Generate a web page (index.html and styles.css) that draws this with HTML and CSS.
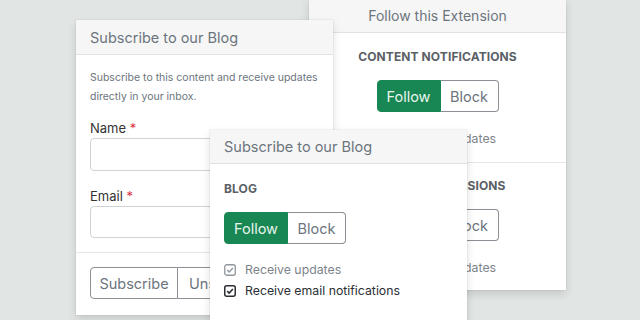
FILE: index.html
```html
<!DOCTYPE html>
<html>
<head>
<meta charset="utf-8">
<link rel="stylesheet" href="styles.css">
</head>
<body>
<div class="canvas">
  <section class="card card-b">
    <div class="card-header center">Follow this Extension</div>
    <div class="section center-col first">
      <div class="sec-title">CONTENT NOTIFICATIONS</div>
      <div class="btn-group">
        <span class="btn btn-follow">Follow</span>
        <span class="btn btn-block">Block</span>
      </div>
      <div class="check-row muted">
        <svg class="cb" width="12" height="12" viewBox="0 0 12 12"><rect x="0.75" y="0.75" width="10.5" height="10.5" rx="2" fill="none" stroke="currentColor" stroke-width="1.3"/><path d="M3.2 6.1 L5.2 8.1 L8.9 4" fill="none" stroke="currentColor" stroke-width="1.4"/></svg>
        <span>Receive updates</span>
      </div>
    </div>
    <div class="section center-col sec-border">
      <div class="sec-title">EXTENSION VERSIONS</div>
      <div class="btn-group">
        <span class="btn btn-follow">Follow</span>
        <span class="btn btn-block">Block</span>
      </div>
      <div class="check-row muted">
        <svg class="cb" width="12" height="12" viewBox="0 0 12 12"><rect x="0.75" y="0.75" width="10.5" height="10.5" rx="2" fill="none" stroke="currentColor" stroke-width="1.3"/><path d="M3.2 6.1 L5.2 8.1 L8.9 4" fill="none" stroke="currentColor" stroke-width="1.4"/></svg>
        <span>Receive updates</span>
      </div>
    </div>
  </section>

  <section class="card card-a">
    <div class="card-header">Subscribe to our Blog</div>
    <div class="card-body">
      <p class="desc">Subscribe to this content and receive updates directly in your inbox.</p>
      <label class="label">Name <span class="req">*</span></label>
      <div class="input"></div>
      <label class="label label-gap">Email <span class="req">*</span></label>
      <div class="input input-last"></div>
    </div>
    <div class="card-footer">
      <div class="btn-group">
        <span class="btn btn-outline">Subscribe</span>
        <span class="btn btn-outline">Unsubscribe</span>
      </div>
    </div>
  </section>

  <section class="card card-c">
    <div class="card-header">Subscribe to our Blog</div>
    <div class="section blog">
      <div class="sec-title">BLOG</div>
      <div class="btn-group">
        <span class="btn btn-follow">Follow</span>
        <span class="btn btn-block">Block</span>
      </div>
      <div class="checks">
        <div class="check-row muted">
          <svg class="cb" width="12" height="12" viewBox="0 0 12 12"><rect x="0.75" y="0.75" width="10.5" height="10.5" rx="2" fill="none" stroke="currentColor" stroke-width="1.3"/><path d="M3.2 6.1 L5.2 8.1 L8.9 4" fill="none" stroke="currentColor" stroke-width="1.4"/></svg>
          <span>Receive updates</span>
        </div>
        <div class="check-row dark">
          <svg class="cb" width="12" height="12" viewBox="0 0 12 12"><rect x="0.75" y="0.75" width="10.5" height="10.5" rx="2" fill="none" stroke="currentColor" stroke-width="1.5"/><path d="M3.2 6.1 L5.2 8.1 L8.9 4" fill="none" stroke="currentColor" stroke-width="1.6"/></svg>
          <span>Receive email notifications</span>
        </div>
      </div>
    </div>
  </section>
</div>
</body>
</html>
```

FILE: styles.css
```css
* { box-sizing: border-box; }
html, body { margin: 0; padding: 0; }
body {
  background: #e1e6e4;
  font-family: Inter, "Noto Sans", sans-serif;
  width: 640px;
  height: 320px;
  overflow: hidden;
}
.canvas { position: relative; width: 640px; height: 320px; overflow: hidden; }

.card {
  position: absolute;
  width: 257px;
  background: #fff;
  box-shadow: 0 0 0 1px rgba(0,0,0,0.035), 0 4px 9px rgba(0,0,0,0.13);
  display: flex;
  flex-direction: column;
}
.card-a { left: 76px; top: 20px; height: 295px; }
.card-b { left: 309px; top: -2px; height: 292px; }
.card-c { left: 210px; top: 130px; height: 200px; }

.card-header {
  height: 35px;
  flex: none;
  display: flex;
  align-items: center;
  padding: 0 14px;
  background: #f6f6f6;
  border-bottom: 1px solid #e2e2e2;
  color: #6c757d;
  font-size: 14.5px;
}
.card-header.center { justify-content: center; font-size: 14px; }
.card-c .card-header { height: 34px; }

.card-body { padding: 13px 14px 14px; border-bottom: 1px solid #e6e6e6; }
.desc {
  margin: 0 -8px 12px 0;
  font-size: 10.5px;
  line-height: 19px;
  color: #6c757d;
}
.label { display: block; font-size: 13px; line-height: 20px; color: #333; }
.label-gap { margin-top: 15px; }
.req { color: #dc3545; }
.input {
  height: 33px;
  border: 1px solid #cfd3d6;
  border-radius: 4px;
}
.input-last { height: 32px; }

.card-footer { padding: 14px 14px; }

.btn-group { display: flex; }
.btn {
  height: 32px;
  display: flex;
  align-items: center;
  justify-content: center;
  font-size: 14.5px;
  border: 1px solid #8a9096;
}
.btn:first-child { border-radius: 4px 0 0 4px; }
.btn:last-child { border-radius: 0 4px 4px 0; border-left: none; }
.btn-outline { color: #6c757d; padding: 0 12px; width: 88px; }
.btn-outline + .btn-outline { width: 110px; }
.btn-follow {
  background: #198754;
  border-color: #198754;
  color: #eaf5ee;
  width: 64px;
}
.btn-block { color: #6c757d; width: 58px; }

.section { padding: 15px 14px 13px; }
.section.first { padding-top: 16px; }
.section.blog { padding-top: 17px; }
.sec-border { border-top: 1px solid #e6e6e6; padding-top: 15px; }
.center-col { display: flex; flex-direction: column; align-items: center; }
.sec-title {
  font-size: 12px;
  font-weight: 700;
  color: #5a6066;
  line-height: 16px;
  margin-bottom: 15px;
  letter-spacing: 0.1px;
}
.check-row {
  display: flex;
  align-items: center;
  gap: 9px;
  font-size: 12.3px;
  line-height: 21px;
}
.center-col .check-row { margin-top: 16px; }
.check-row.muted { color: #7d848a; }
.check-row.muted .cb { color: #8f969c; }
.check-row.dark { color: #2b2f33; }
.checks { margin-top: 15px; }
.cb { flex: none; }
```
